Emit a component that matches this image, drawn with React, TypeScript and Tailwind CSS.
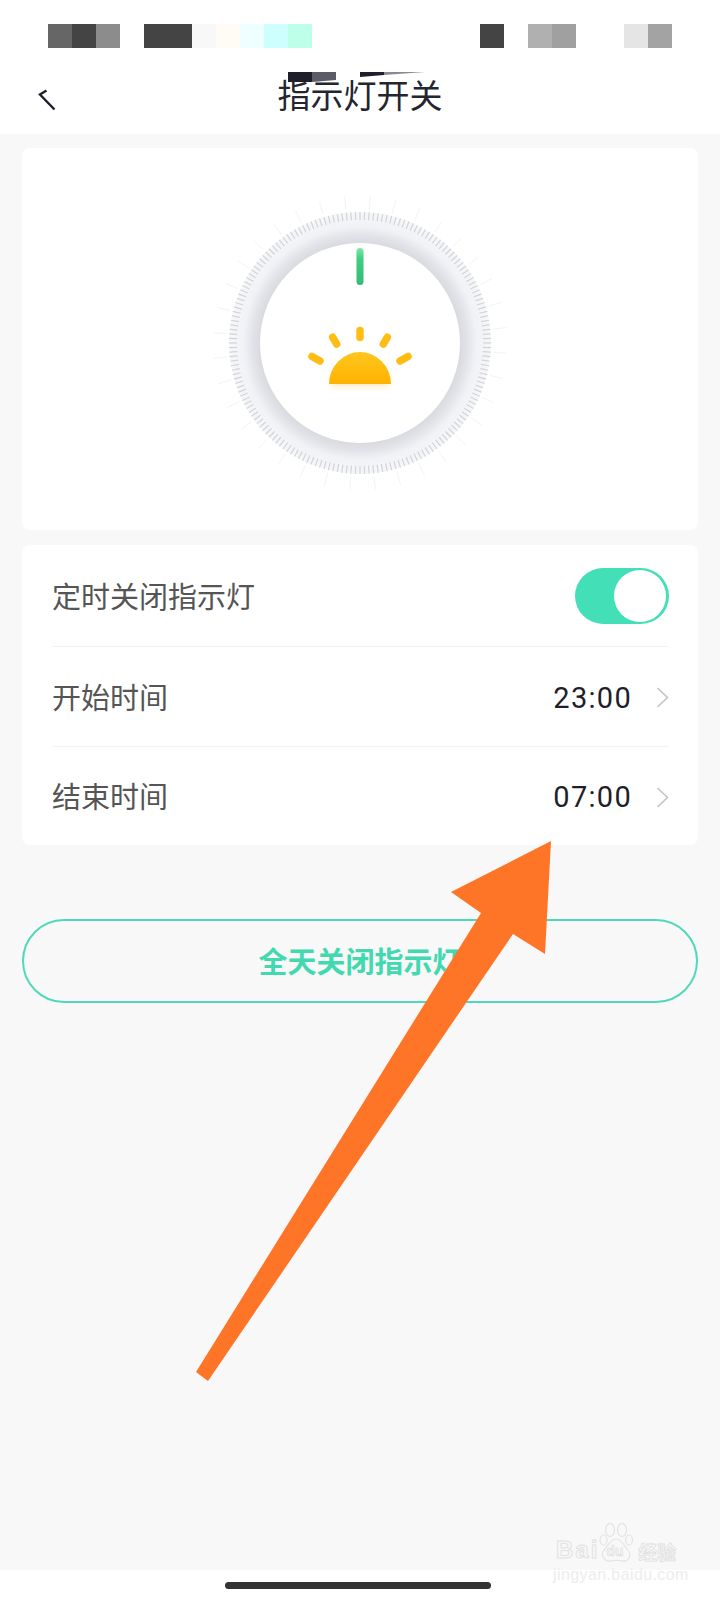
const statusCells = [
  "bg-[#666666]", "bg-[#444444]", "bg-[#8c8c8c]", "bg-transparent",
  "bg-[#444444]", "bg-[#444444]", "bg-[#f8f8f8]", "bg-[#fffcf5]", "bg-[#effeff]", "bg-[#ceffff]", "bg-[#bdffe8]",
  "bg-transparent", "bg-transparent", "bg-transparent", "bg-transparent", "bg-transparent", "bg-transparent", "bg-transparent",
  "bg-[#444444]", "bg-transparent", "bg-[#b0b0b0]", "bg-[#a0a0a0]", "bg-transparent", "bg-transparent",
  "bg-[#e5e5e5]", "bg-[#a3a3a3]",
];

const cjk = "font-['Noto_Sans_CJK_SC','Noto_Sans',sans-serif]";

function Dial() {
  const cx = 150;
  const cy = 150;
  const shortTicks = Array.from({ length: 180 }, (_, i) => (i * 2 * Math.PI) / 180);
  const longTicks = Array.from({ length: 36 }, (_, i) => ((i * 10 + 4) * Math.PI) / 180);
  const rays = [
    [150, 137.5, 150, 144.5],
    [122.7, 144.3, 126.7, 151.1],
    [177.3, 144.3, 173.3, 151.1],
    [102, 163.4, 110, 168],
    [198, 163.4, 190, 168],
  ];

  return (
    <svg width="300" height="300" viewBox="0 0 300 300">
      <defs>
        <radialGradient id="ring" cx="50%" cy="50%" r="50%">
          <stop offset="0.76" stopColor="#d9dadf" />
          <stop offset="0.82" stopColor="#e2e3e8" />
          <stop offset="0.89" stopColor="#f1f2f5" />
          <stop offset="1" stopColor="#f6f7f9" />
        </radialGradient>
        <linearGradient id="sun" x1="0" y1="0" x2="0" y2="1">
          <stop offset="0" stopColor="#ffc51f" />
          <stop offset="1" stopColor="#ffb300" />
        </linearGradient>
        <linearGradient id="bar" x1="0" y1="0" x2="0" y2="1">
          <stop offset="0" stopColor="#7be6a8" />
          <stop offset="0.3" stopColor="#3dd07e" />
          <stop offset="1" stopColor="#35b877" />
        </linearGradient>
        <filter id="glow" x="-30%" y="-30%" width="160%" height="170%">
          <feGaussianBlur stdDeviation="3" />
        </filter>
      </defs>
      {longTicks.map((a, i) => (
        <line
          key={i}
          x1={cx + 134 * Math.cos(a)}
          y1={cy + 134 * Math.sin(a)}
          x2={cx + 147 * Math.cos(a)}
          y2={cy + 147 * Math.sin(a)}
          stroke="#f3f3f5"
          strokeWidth="1"
        />
      ))}
      <circle cx={cx} cy={cy} r="131" fill="url(#ring)" />
      {shortTicks.map((a, i) => (
        <line
          key={i}
          x1={cx + 123 * Math.cos(a)}
          y1={cy + 123 * Math.sin(a)}
          x2={cx + 131 * Math.cos(a)}
          y2={cy + 131 * Math.sin(a)}
          stroke="#d2d3da"
          strokeWidth="1.2"
        />
      ))}
      <circle cx={cx} cy={cy} r="100" fill="#ffffff" />
      <rect x="146.5" y="55" width="7" height="37" rx="3.5" fill="url(#bar)" />
      <path d="M121 193 A29 27 0 0 1 179 193 Z" fill="#ffcf70" opacity="0.5" filter="url(#glow)" />
      <path d="M119 191 A31 32 0 0 1 181 191 Z" fill="url(#sun)" />
      {rays.map(([x1, y1, x2, y2], i) => (
        <line key={i} x1={x1} y1={y1} x2={x2} y2={y2} stroke="#ffbd14" strokeWidth="7.5" strokeLinecap="round" />
      ))}
    </svg>
  );
}

function Row({ label, value, h }: { label: string; value: string; h: string }) {
  return (
    <div className={`flex items-center justify-between ${h}`}>
      <span className={`text-[29px] text-[#555555] ${cjk}`}>{label}</span>
      <div className="flex items-center">
        <span className="mt-[4px] text-[29px] tracking-[1.3px] text-[#1e1f2b] font-['Roboto',sans-serif]">{value}</span>
        <svg width="13" height="21" viewBox="0 0 13 21" className="ml-[24px] mt-[2px]">
          <path d="M1.5 1 L11.5 10.5 L1.5 20" fill="none" stroke="#c4c4c4" strokeWidth="1.6" />
        </svg>
      </div>
    </div>
  );
}

function Watermark() {
  return (
    <div className="absolute left-[553px] top-[1523px] h-[60px] w-[130px]">
      <div className="flex h-[40px] items-end">
        <span className="mb-[1px] ml-[3px] text-[24px] leading-[24px] font-bold tracking-[2px] text-transparent [-webkit-text-stroke:1px_#e2e2e2] font-['Liberation_Sans',sans-serif]">
          Bai
        </span>
        <div className="relative h-[40px] w-[35px]">
          <svg width="35" height="40" viewBox="0 0 35 40" fill="none" stroke="#e2e2e2" strokeWidth="1.1">
            <ellipse cx="11" cy="7" rx="4.5" ry="6.5" />
            <ellipse cx="23" cy="7" rx="4.5" ry="6.5" />
            <ellipse cx="4.5" cy="17" rx="3.5" ry="5" />
            <ellipse cx="30" cy="17" rx="3.5" ry="5" />
            <path d="M17 16 C11 16 9 23 5 27 C1 32 5 39 12 38 C16 37 19 37 23 38 C30 39 33 32 29 27 C25 23 23 16 17 16 Z" />
          </svg>
          <span className="absolute left-[7px] top-[21px] text-[14px] leading-[14px] font-bold text-transparent [-webkit-text-stroke:0.7px_#dddddd] font-['Liberation_Sans',sans-serif]">
            du
          </span>
        </div>
        <span className={`ml-[4px] whitespace-nowrap text-[19px] leading-[22px] font-bold text-transparent [-webkit-text-stroke:0.8px_#e0e0e0] ${cjk}`}>
          经验
        </span>
      </div>
      <div className="mt-[4px] whitespace-nowrap text-[16px] leading-[16px] tracking-[0.4px] text-[#ededed] font-['Liberation_Sans',sans-serif]">
        jingyan.baidu.com
      </div>
    </div>
  );
}

export default function App() {
  return (
    <div className="relative flex h-[1600px] w-[720px] flex-col overflow-hidden bg-[#f8f8f8]">
      <header className="h-[134px] bg-white pt-6">
        <div className="ml-12 flex">
          {statusCells.map((c, i) => (
            <div key={i} className={`h-6 w-6 ${c}`} />
          ))}
        </div>
        <div className="relative mt-6 h-[62px]">
          <svg width="137" height="10" viewBox="0 0 137 10" className="absolute left-[288px] top-0">
            <rect x="0" y="0" width="24" height="10" fill="#1e1f2b" />
            <path d="M24 0 H48 V8 L24 10 Z" fill="#5a5c66" />
            <path d="M72 0 H96 V3 L72 5 Z" fill="#1e1f2b" />
            <path d="M96 0 H137 L96 3 Z" fill="#8a8b92" />
          </svg>
          <svg width="20" height="22" viewBox="0 0 20 22" className="absolute left-[38px] top-[17px]">
            <path d="M8.5 1.5 L2 5.5 L16.5 20.5" fill="none" stroke="#1e1f2b" strokeWidth="2.4" />
          </svg>
          <h1 className={`relative text-center text-[33px] font-normal leading-[44px] text-[#24252f] ${cjk}`}>指示灯开关</h1>
        </div>
      </header>

      <section className="mx-[22px] mt-[14px] flex h-[382px] justify-center rounded-lg bg-white pt-[45px]">
        <Dial />
      </section>

      <section className="mx-[22px] mt-[15px] rounded-lg bg-white pl-[30px] pr-[29px]">
        <div className="flex h-[102px] items-center justify-between border-b-[1.5px] border-[#f3f3f3]">
          <span className={`text-[29px] text-[#555555] ${cjk}`}>定时关闭指示灯</span>
          <div className="flex h-14 w-[94px] items-center justify-end rounded-full bg-[#43dfb6] pr-[3px]">
            <div className="h-[52px] w-[52px] rounded-full bg-white" />
          </div>
        </div>
        <div className="border-b-[1.5px] border-[#f3f3f3]">
          <Row label="开始时间" value="23:00" h="h-[99px]" />
        </div>
        <Row label="结束时间" value="07:00" h="h-[98px]" />
      </section>

      <button className={`mx-[22px] mt-[74px] h-[84px] rounded-full border-2 border-[#4fd9b6] text-[29px] font-bold text-[#43d9b0] ${cjk}`}>
        全天关闭指示灯
      </button>

      <footer className="mt-auto h-[30px] bg-white pl-[225px] pt-3">
        <div className="h-[7px] w-[266px] rounded-full bg-[#333333]" />
      </footer>

      {/* annotation arrow on top of the screenshot */}
      <svg width="720" height="1600" viewBox="0 0 720 1600" className="pointer-events-none absolute left-0 top-0">
        <polygon points="551,841 545,954 513,934 208,1381 196,1372 481,913 451,892" fill="#ff7527" />
      </svg>

      <Watermark />
    </div>
  );
}
